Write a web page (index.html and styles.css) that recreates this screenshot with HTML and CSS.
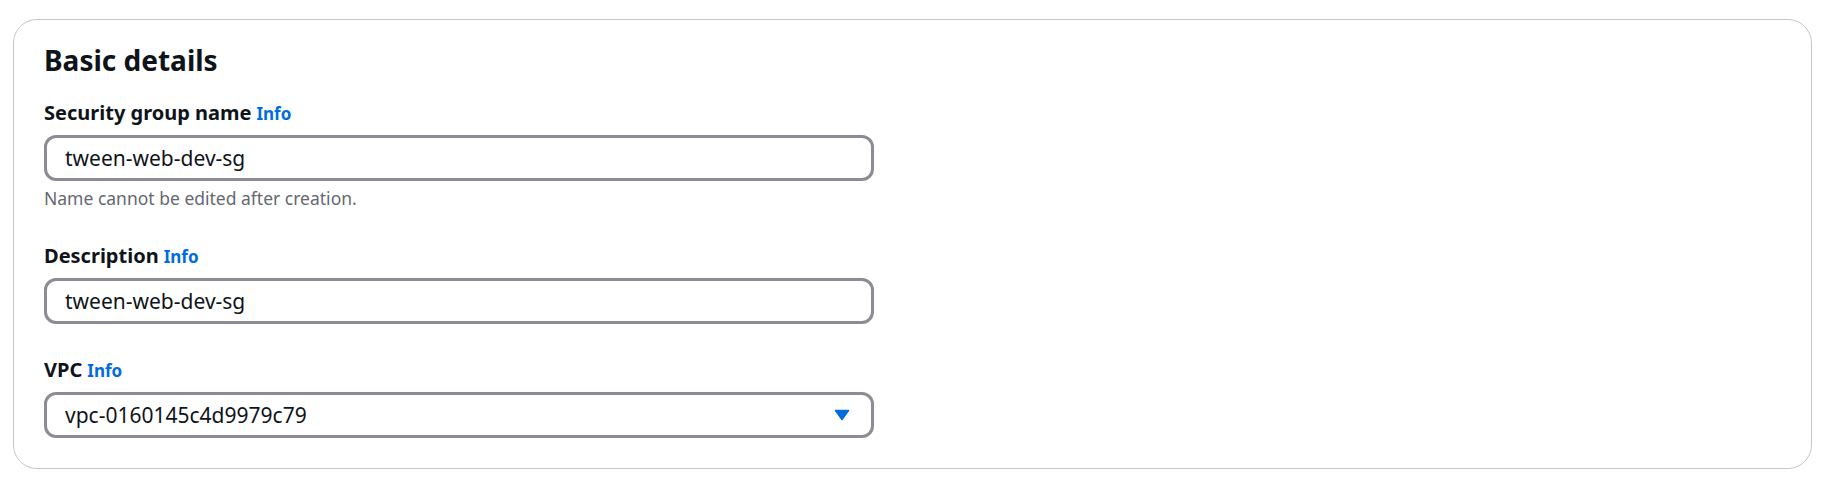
FILE: index.html
```html
<!DOCTYPE html>
<html>
<head>
<meta charset="utf-8">
<link rel="stylesheet" href="styles.css">
</head>
<body>
<div class="page">
  <section class="container">
    <h2 class="heading">Basic details</h2>
    <div class="fields">
      <div class="field">
        <div class="label-row"><span class="label">Security group name</span><a class="info">Info</a></div>
        <div class="input"><span>tween-web-dev-sg</span></div>
        <div class="constraint">Name cannot be edited after creation.</div>
      </div>
      <div class="field">
        <div class="label-row"><span class="label">Description</span><a class="info">Info</a></div>
        <div class="input"><span>tween-web-dev-sg</span></div>
      </div>
      <div class="field">
        <div class="label-row"><span class="label">VPC</span><a class="info">Info</a></div>
        <div class="input select"><span>vpc-0160145c4d9979c79</span>
          <svg class="caret" width="16" height="12" viewBox="0 0 16 12"><path d="M1.5 1.5 L14.5 1.5 L8 10.5 Z" fill="#006ce0" stroke="#006ce0" stroke-width="1.5" stroke-linejoin="round"/></svg>
        </div>
      </div>
    </div>
  </section>
</div>
</body>
</html>
```
FILE: styles.css
```css
html, body {
  margin: 0;
  padding: 0;
  background: #ffffff;
}
body {
  font-family: "Noto Sans", "Open Sans", sans-serif;
  color: #0f141a;
}
.page {
  padding: 19px 20px 0 13px;
}
.container {
  border: 1px solid #c6c6cd;
  border-radius: 24px;
  padding: 23px 30px 30px 30px;
}
.heading {
  margin: 0;
  font-size: 28px;
  line-height: 34px;
  font-weight: 700;
}
.fields {
  margin-top: 20px;
  display: flex;
  flex-direction: column;
  gap: 30px;
}
.label-row {
  display: flex;
  align-items: baseline;
  gap: 5px;
  height: 32px;
  margin-bottom: 6px;
}
.label {
  font-size: 20px;
  line-height: 32px;
  font-weight: 700;
}
.info {
  font-size: 17px;
  line-height: 20px;
  font-weight: 700;
  color: #006ce0;
}
.input {
  width: 830px;
  height: 46px;
  box-sizing: border-box;
  border: 3px solid #8c8c94;
  border-radius: 12px;
  padding: 0 18px;
  display: flex;
  align-items: center;
  font-size: 21px;
}
.select {
  justify-content: space-between;
  padding-right: 21px;
}
.caret {
  display: block;
}
.constraint {
  margin-top: 5px;
  font-size: 17.5px;
  line-height: 24px;
  color: #656871;
}
```
